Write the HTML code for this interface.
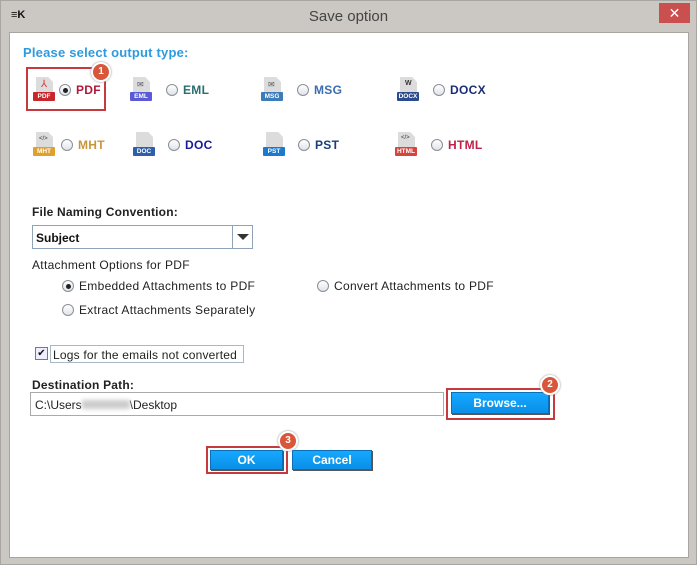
<!DOCTYPE html>
<html><head><meta charset="utf-8"><style>
*{margin:0;padding:0;box-sizing:border-box}
body{width:700px;height:568px;background:#fff;font-family:"Liberation Sans",Arial,sans-serif;position:relative;overflow:hidden}
.a{position:absolute}
.frame{left:0;top:0;width:697px;height:565px;background:#cbc7c3;border:1px solid #a9a6a2}
.content{left:9px;top:32px;width:680px;height:526px;background:#fff;border:1px solid #a8a5a0}
.title{left:0;top:8px;width:697px;text-align:center;font-size:15px;color:#444}
.close{left:659px;top:3px;width:31px;height:20px;background:#c9504f;color:#fff;text-align:center;font-size:14px;line-height:20px}
.lbl{font-size:12px;font-weight:bold;color:#222;letter-spacing:0.2px}
.t{font-size:12px;color:#222;letter-spacing:0.3px}
.radio{width:12px;height:12px;border-radius:50%;border:1px solid #8a8f96;background:linear-gradient(#fff,#dfe3e8)}
.radio.on::after{content:"";position:absolute;left:2.5px;top:2.5px;width:5px;height:5px;border-radius:50%;background:#222}
.opt{font-size:12px;font-weight:bold;letter-spacing:0.3px}
.ic{width:22px;height:26px}
.ic .pg{position:absolute;left:3px;top:0;width:17px;height:20px;background:#dcdcdc;clip-path:polygon(0 0,72% 0,100% 25%,100% 100%,0 100%)}
.ic .tg{position:absolute;left:0;top:15px;width:22px;height:9px;font-size:6.5px;color:#fff;text-align:center;line-height:9px;font-weight:bold;border-radius:1px}
.btn{background:linear-gradient(#16a8ff,#0a8fe8);color:#fff;font-size:12px;font-weight:bold;text-align:center;border:1px solid #0a6fb8;box-shadow:1px 1px 0 #555}
.hl{border:2px solid #c43a3f}
.badge{width:20px;height:20px;border-radius:50%;background:#d8573a;border:2px solid #fff;box-shadow:0 0 2px #888;color:#fff;font-size:10px;font-weight:bold;text-align:center;line-height:16px}
</style></head><body>
<div class="a frame"></div>
<div class="a" style="left:11px;top:9px;width:16px;height:12px;font-size:11px;font-weight:bold;color:#111;line-height:12px">≡K</div>
<div class="a title">Save option</div>
<div class="a close">✕</div>
<div class="a content"></div>

<div class="a" style="left:23px;top:45px;font-size:13px;font-weight:bold;color:#2d9be0;letter-spacing:0.2px">Please select output type:</div>

<div class="a hl" style="left:26px;top:67px;width:80px;height:44px"></div>
<div class="a badge" style="left:91px;top:62px">1</div>

<div class="a ic" style="left:33px;top:77px"><div class="pg"></div><div class="a" style="left:8px;top:2px;color:#d33;font-size:10px">⅄</div><div class="tg" style="background:#c9262c">PDF</div></div>
<div class="a radio on" style="left:59px;top:84px"></div>
<div class="a opt" style="left:76px;top:83px;color:#b0193a">PDF</div>

<div class="a ic" style="left:130px;top:77px"><div class="pg"></div><div class="a" style="left:7px;top:3px;font-size:8px;color:#555">✉</div><div class="tg" style="background:#5a5ad6">EML</div></div>
<div class="a radio" style="left:166px;top:84px"></div>
<div class="a opt" style="left:183px;top:83px;color:#2a6e6e">EML</div>

<div class="a ic" style="left:261px;top:77px"><div class="pg"></div><div class="a" style="left:7px;top:3px;font-size:8px;color:#555">✉</div><div class="tg" style="background:#3c7cb8">MSG</div></div>
<div class="a radio" style="left:297px;top:84px"></div>
<div class="a opt" style="left:314px;top:83px;color:#3c6db0">MSG</div>

<div class="a ic" style="left:397px;top:77px"><div class="pg"></div><div class="a" style="left:8px;top:3px;font-size:7px;color:#333;font-weight:bold">W</div><div class="tg" style="background:#2b4c8c">DOCX</div></div>
<div class="a radio" style="left:433px;top:84px"></div>
<div class="a opt" style="left:450px;top:83px;color:#1a2e78">DOCX</div>

<div class="a ic" style="left:33px;top:132px"><div class="pg"></div><div class="a" style="left:6px;top:4px;font-size:6px;color:#333">&lt;/&gt;</div><div class="tg" style="background:#e0a030">MHT</div></div>
<div class="a radio" style="left:61px;top:139px"></div>
<div class="a opt" style="left:78px;top:138px;color:#c8963a">MHT</div>

<div class="a ic" style="left:133px;top:132px"><div class="pg"></div><div class="tg" style="background:#2f5fa8">DOC</div></div>
<div class="a radio" style="left:168px;top:139px"></div>
<div class="a opt" style="left:185px;top:138px;color:#1a1a9a">DOC</div>

<div class="a ic" style="left:263px;top:132px"><div class="pg"></div><div class="tg" style="background:#1a7ad0">PST</div></div>
<div class="a radio" style="left:298px;top:139px"></div>
<div class="a opt" style="left:315px;top:138px;color:#1a3e78">PST</div>

<div class="a ic" style="left:395px;top:132px"><div class="pg"></div><div class="a" style="left:6px;top:3px;font-size:6px;color:#333">&lt;/&gt;</div><div class="tg" style="background:#d8443c">HTML</div></div>
<div class="a radio" style="left:431px;top:139px"></div>
<div class="a opt" style="left:448px;top:138px;color:#c0204a">HTML</div>

<div class="a lbl" style="left:32px;top:205px">File Naming Convention:</div>
<div class="a" style="left:32px;top:225px;width:221px;height:24px;border:1px solid #8fa3b8;background:#fff"></div>
<div class="a" style="left:36px;top:231px;font-size:12px;font-weight:bold;color:#111">Subject</div>
<div class="a" style="left:232px;top:226px;width:1px;height:22px;background:#8fa3b8"></div>
<div class="a" style="left:237px;top:234px;width:0;height:0;border-left:6px solid transparent;border-right:6px solid transparent;border-top:6px solid #333"></div>

<div class="a t" style="left:32px;top:258px">Attachment Options for PDF</div>
<div class="a radio on" style="left:62px;top:280px"></div>
<div class="a t" style="left:79px;top:279px">Embedded Attachments to PDF</div>
<div class="a radio" style="left:317px;top:280px"></div>
<div class="a t" style="left:334px;top:279px">Convert Attachments to PDF</div>
<div class="a radio" style="left:62px;top:304px"></div>
<div class="a t" style="left:79px;top:303px">Extract Attachments Separately</div>

<div class="a" style="left:35px;top:347px;width:13px;height:13px;border:1px solid #778;background:#eef;font-size:10px;line-height:11px;text-align:center;color:#111">✔</div>
<div class="a" style="left:50px;top:345px;width:194px;height:18px;border:1px solid #a8b8c8"></div>
<div class="a t" style="left:53px;top:348px;letter-spacing:0.2px">Logs for the emails not converted</div>

<div class="a lbl" style="left:32px;top:378px">Destination Path:</div>
<div class="a" style="left:30px;top:392px;width:414px;height:24px;border:1px solid #aaa;background:#fff"></div>
<div class="a" style="left:35px;top:398px;font-size:12px;color:#222">C:\Users<span style="display:inline-block;width:48px;height:9px;background:#ccc;filter:blur(2px)"></span>\Desktop</div>

<div class="a hl" style="left:446px;top:388px;width:109px;height:32px"></div>
<div class="a btn" style="left:451px;top:392px;width:98px;height:22px;line-height:20px">Browse...</div>
<div class="a badge" style="left:540px;top:375px">2</div>

<div class="a hl" style="left:206px;top:446px;width:82px;height:28px"></div>
<div class="a btn" style="left:210px;top:450px;width:73px;height:20px;line-height:18px">OK</div>
<div class="a btn" style="left:292px;top:450px;width:80px;height:20px;line-height:18px">Cancel</div>
<div class="a badge" style="left:278px;top:431px">3</div>
</body></html>
